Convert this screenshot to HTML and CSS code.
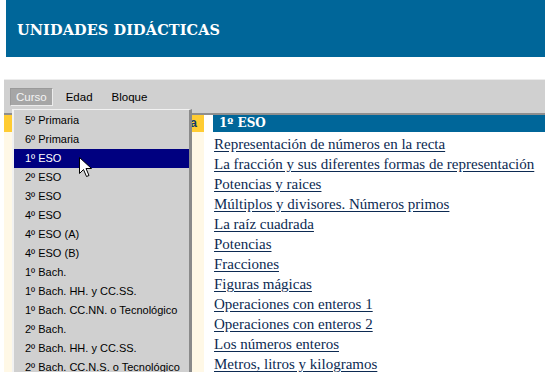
FILE: index.html
```html
<!DOCTYPE html>
<html lang="es">
<head>
    <meta charset="UTF-8">
    <title>Unidades didácticas</title>
    <link rel="stylesheet" href="styles.css">
</head>
<body>
    <header class="banner">
        <h1>UNIDADES DIDÁCTICAS</h1>
    </header>

    <nav class="menubar">
        <span class="menubar__item pressed">Curso</span>
        <span class="menubar__item">Edad</span>
        <span class="menubar__item">Bloque</span>
    </nav>

    <div class="content">
        <aside class="side">
            <div class="side__head">Temática</div>
        </aside>
        <main class="units">
            <h2 class="units__title">1º ESO</h2>
            <ul class="units__list">
                <li><a href="#">Representación de números en la recta</a></li>
                <li><a href="#">La fracción y sus diferentes formas de representación</a></li>
                <li><a href="#">Potencias y raices</a></li>
                <li><a href="#">Múltiplos y divisores. Números primos</a></li>
                <li><a href="#">La raíz cuadrada</a></li>
                <li><a href="#">Potencias</a></li>
                <li><a href="#">Fracciones</a></li>
                <li><a href="#">Figuras mágicas</a></li>
                <li><a href="#">Operaciones con enteros 1</a></li>
                <li><a href="#">Operaciones con enteros 2</a></li>
                <li><a href="#">Los números enteros</a></li>
                <li><a href="#">Metros, litros y kilogramos</a></li>
            </ul>
        </main>

        <!-- dropdown of the Curso menu, open over the page -->
        <ul class="dropdown">
            <li>5º Primaria</li>
            <li>6º Primaria</li>
            <li class="selected">1º ESO</li>
            <li>2º ESO</li>
            <li>3º ESO</li>
            <li>4º ESO</li>
            <li>4º ESO (A)</li>
            <li>4º ESO (B)</li>
            <li>1º Bach.</li>
            <li>1º Bach. HH. y CC.SS.</li>
            <li>1º Bach. CC.NN. o Tecnológico</li>
            <li>2º Bach.</li>
            <li>2º Bach. HH. y CC.SS.</li>
            <li>2º Bach. CC.N.S. o Tecnológico</li>
        </ul>

        <svg class="pointer" width="14" height="22" viewBox="0 0 14 22" xmlns="http://www.w3.org/2000/svg">
            <path d="M0.5 0.5 L0.5 16.5 L4.5 12.5 L7.5 19.5 L10 18.5 L7 11.5 L12.5 11.5 Z" fill="#fff" stroke="#000" stroke-width="1" stroke-linejoin="miter"/>
        </svg>
    </div>
</body>
</html>
```

FILE: styles.css
```css
* {
	box-sizing: border-box;
	margin: 0;
	padding: 0;
}

:root {
	--blue: #006699;
	--menu: #d0d0d0;
	--link: #0c2a52;
}

body {
	background: #fff;
	height: 100vh;
	overflow: hidden;
}

.banner {
	margin-left: 6px;
	height: 57px;
	background: var(--blue);
	display: flex;
	align-items: center;
	padding: 2px 0 0 11px;

	h1 {
		color: #fff;
		font-family: "DejaVu Serif", "Liberation Serif", serif;
		font-size: 14.5px;
		font-weight: bold;
		letter-spacing: 0.1px;
	}
}

.menubar {
	margin: 22px 0 0 4px;
	height: 36px;
	background: var(--menu);
	border-top: 1px solid #ececec;
	border-bottom: 2px solid #8e8e8e;
	display: flex;
	align-items: center;
	gap: 7px;
	padding: 0 0 0 6px;
	font-family: "Liberation Sans", Arial, sans-serif;
	font-size: 11.5px;
	color: #000;
}

.menubar__item {
	padding: 2px 5px 2px;
	border: 1px solid transparent;

	&.pressed {
		background: #a6a6a6;
		color: #f4f4f4;
		border-color: #9a9a9a #ececec #ececec #9a9a9a;
	}
}

.content {
	position: relative;
	display: flex;
	gap: 9px;
	height: 260px;
}

.side {
	width: 200px;
	margin-left: 4px;
	background: #fff8e6;

	.side__head {
		height: 17px;
		background: #ffcc33;
		color: #123a6b;
		font-family: "Liberation Sans", Arial, sans-serif;
		font-size: 12px;
		font-weight: bold;
		line-height: 17px;
		text-align: right;
		padding-right: 7px;
		white-space: nowrap;
		overflow: hidden;
	}
}

.units {
	flex: 1;

	.units__title {
		height: 17px;
		background: var(--blue);
		color: #fff;
		font-family: "DejaVu Serif", "Liberation Serif", serif;
		font-size: 12px;
		font-weight: bold;
		line-height: 17px;
		padding-left: 6px;
	}
}

.units__list {
	list-style: none;
	padding: 2px 0 0 1px;
	font-family: "Liberation Serif", "Times New Roman", serif;
	font-size: 15px;
	line-height: 20px;

	a {
		color: var(--link);
		text-decoration: underline;
		text-underline-offset: 2px;
	}
}

.dropdown {
	position: absolute;
	top: -6px;
	left: 12px;
	width: 180px;
	height: 280px;
	list-style: none;
	background: var(--menu);
	border-top: 1px solid #f2f2f2;
	border-left: 2px solid #f2f2f2;
	border-right: 3px solid #8a8a8a;
	padding: 1px 0 0;
	font-family: "Liberation Sans", Arial, sans-serif;
	font-size: 11px;
	color: #000;

	li {
		height: 19px;
		line-height: 19px;
		padding-left: 11px;
		white-space: nowrap;
	}

	.selected {
		background: #000080;
		color: #fff;
	}
}

.pointer {
	position: absolute;
	top: 42px;
	left: 79px;
}
```
